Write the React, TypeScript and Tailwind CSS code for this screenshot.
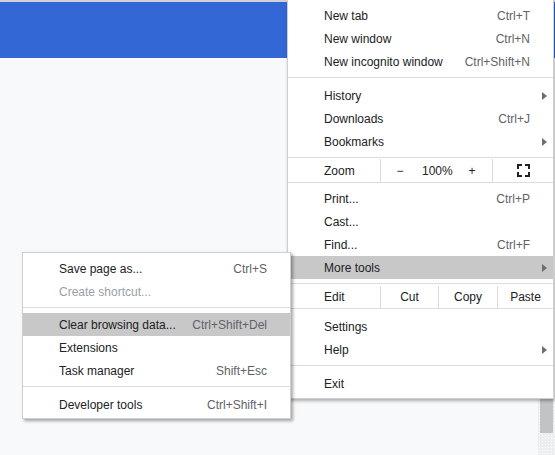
import React from "react";

const FONT = { fontFamily: '"Liberation Sans", Arial, sans-serif' };

function Arrow() {
  return (
    <svg className="absolute right-[6px] top-1/2 -translate-y-1/2" width="5" height="8" viewBox="0 0 5 8">
      <path d="M0 0 L5 4 L0 8 Z" fill="#6e6e6e" />
    </svg>
  );
}

function Row({
  label,
  shortcut,
  arrow,
  highlight,
  disabled,
}: {
  label: string;
  shortcut?: string;
  arrow?: boolean;
  highlight?: boolean;
  disabled?: boolean;
}) {
  return (
    <div
      className={`relative flex h-[23px] items-center justify-between pl-[36px] pr-[23px] text-[12px] ${
        highlight ? "bg-[#c8c8c8]" : ""
      }`}
    >
      <span className={disabled ? "text-[#9aa0a6]" : "text-[#202124]"}>{label}</span>
      {shortcut && <span className="text-[#5f6368]">{shortcut}</span>}
      {arrow && <Arrow />}
    </div>
  );
}

function Sep({ mb = "mb-[6px]" }: { mb?: string }) {
  return <div className={`mt-[4px] h-px bg-[#dcdcdc] ${mb}`} />;
}

function FullscreenIcon() {
  return (
    <svg width="13" height="13" viewBox="0 0 13 13" fill="none" stroke="#202124" strokeWidth="2">
      <path d="M1 5 V1 H5" />
      <path d="M8 1 H12 V5" />
      <path d="M12 8 V12 H8" />
      <path d="M5 12 H1 V8" />
    </svg>
  );
}

export default function App() {
  return (
    <div className="relative h-[455px] w-[555px] overflow-hidden bg-[#f8f9fa]" style={FONT}>
      <div className="h-[2px] bg-[#cfd1d4]" />
      <div className="h-[56px] bg-[#3367d6]" />

      {/* scrollbar */}
      <div className="absolute left-[538px] top-[398px] flex h-[57px] w-[17px] flex-col bg-[#eceeef] bg-[radial-gradient(#ffffff_1px,transparent_1px)] bg-[length:3px_3px]">
        <div className="ml-[2px] h-[35px] w-[13px] bg-[#c1c3c5]" />
      </div>

      {/* main menu */}
      <div className="absolute left-[287px] top-0 w-[267px] border border-t-0 border-[#cfcfcf] bg-white pb-[3px] pt-[4px] shadow-[1px_2px_3px_rgba(0,0,0,0.3)]">
        <Row label="New tab" shortcut="Ctrl+T" />
        <Row label="New window" shortcut="Ctrl+N" />
        <Row label="New incognito window" shortcut="Ctrl+Shift+N" />
        <Sep />
        <Row label="History" arrow />
        <Row label="Downloads" shortcut="Ctrl+J" />
        <Row label="Bookmarks" arrow />
        <div className="mt-[4px] flex h-[26px] border-y border-[#dcdcdc] pt-[1px] text-[12px] text-[#202124]">
          <div className="flex w-[92px] items-center pl-[36px]">Zoom</div>
          <div className="relative flex w-[112px] items-center border-l border-[#dcdcdc]">
            <span className="absolute left-[14px] w-[10px] text-center">−</span>
            <span className="absolute left-[41px] w-[30px] text-center">100%</span>
            <span className="absolute left-[86px] w-[10px] text-center">+</span>
          </div>
          <div className="flex flex-1 items-center justify-center border-l border-[#dcdcdc]">
            <FullscreenIcon />
          </div>
        </div>
        <div className="pt-[4px]">
          <Row label="Print..." shortcut="Ctrl+P" />
          <Row label="Cast..." />
          <Row label="Find..." shortcut="Ctrl+F" />
          <Row label="More tools" arrow highlight />
        </div>
        <div className="mt-[4px] flex h-[26px] border-y border-[#dcdcdc] pt-[2px] text-[12px] text-[#202124]">
          <div className="flex w-[92px] items-center pl-[36px]">Edit</div>
          <div className="flex w-[58px] items-center justify-center border-l border-[#dcdcdc]">Cut</div>
          <div className="flex w-[59px] items-center justify-center border-l border-[#dcdcdc]">Copy</div>
          <div className="flex flex-1 items-center justify-center border-l border-[#dcdcdc]">Paste</div>
        </div>
        <div className="pt-[6px]">
          <Row label="Settings" />
          <Row label="Help" arrow />
          <Sep />
          <Row label="Exit" />
        </div>
      </div>

      {/* submenu */}
      <div className="absolute left-[22px] top-[252px] w-[269px] border border-[#cfcfcf] bg-white pb-[2px] pt-[4px] shadow-[2px_2px_3px_rgba(0,0,0,0.35)]">
        <Row label="Save page as..." shortcut="Ctrl+S" />
        <Row label="Create shortcut..." disabled />
        <Sep mb="mb-[5px]" />
        <Row label="Clear browsing data..." shortcut="Ctrl+Shift+Del" highlight />
        <Row label="Extensions" />
        <Row label="Task manager" shortcut="Shift+Esc" />
        <Sep />
        <Row label="Developer tools" shortcut="Ctrl+Shift+I" />
      </div>
    </div>
  );
}
